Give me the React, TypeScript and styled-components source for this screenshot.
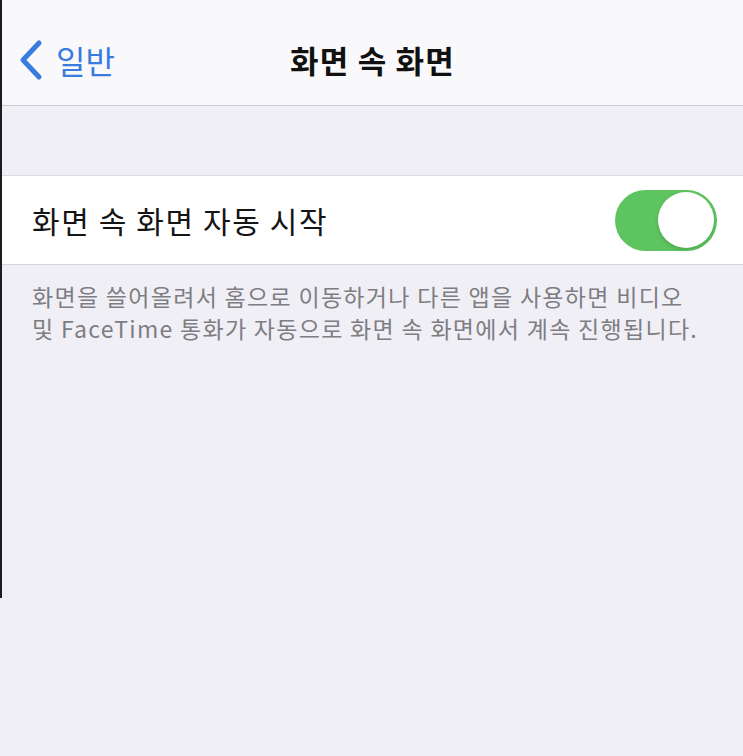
import React from "react";
import styled, { createGlobalStyle } from "styled-components";

const Global = createGlobalStyle`
  html, body { margin: 0; padding: 0; background: #f0eff5; }
  body { font-family: "Noto Sans CJK KR", "Noto Sans", sans-serif; -webkit-font-smoothing: antialiased; }
`;

const Page = styled.div`
  width: 743px;
  min-height: 756px;
  background: #f0eff5;
`;

const Frame = styled.div`
  height: 598px;
  border-left: 2px solid #1c1c1e;
  box-sizing: border-box;
  display: flex;
  flex-direction: column;
`;

const NavBar = styled.header`
  background: #f9f9fb;
  border-bottom: 1px solid #c9c8cd;
  display: grid;
  grid-template-columns: 1fr auto 1fr;
  align-items: center;
  padding-top: 14px;
  height: 91px;
`;

const BackButton = styled.div`
  display: flex;
  align-items: center;
  gap: 12px;
  padding-left: 16px;
  color: #3a7be0;
  font-size: 32px;
  font-weight: 400;
`;

const Title = styled.h1`
  margin: 0;
  font-size: 31px;
  font-weight: 700;
  color: #111;
  letter-spacing: 1.2px;
`;

const Spacer = styled.div`
  height: 69px;
`;

const Cell = styled.div`
  height: 88px;
  background: #fff;
  border-top: 1px solid #dcdce0;
  border-bottom: 1px solid #d6d6da;
  display: flex;
  align-items: center;
  justify-content: space-between;
  padding: 0 26px 0 30px;
`;

const CellLabel = styled.span`
  font-size: 30px;
  color: #141414;
  letter-spacing: 1.6px;
`;

const Toggle = styled.div<{ $on: boolean }>`
  width: 102px;
  height: 61px;
  border-radius: 31px;
  background: ${(p) => (p.$on ? "#5ec45f" : "#e5e5ea")};
  display: flex;
  align-items: center;
  justify-content: ${(p) => (p.$on ? "flex-end" : "flex-start")};
  padding: 0 3px;
  box-sizing: border-box;
`;

const Knob = styled.div`
  width: 56px;
  height: 56px;
  border-radius: 50%;
  background: #fff;
  box-shadow: 0 2px 4px rgba(0, 0, 0, 0.15);
`;

const Footer = styled.p`
  margin: 0;
  padding: 15px 20px 0 30px;
  font-size: 23px;
  line-height: 32px;
  color: #7d7d82;
  letter-spacing: 1.3px;
  white-space: nowrap;
`;

export default function App() {
  return (
    <Page>
      <Global />
      <Frame>
        <NavBar>
          <BackButton>
            <svg width="26" height="42" viewBox="0 0 26 42">
              <path d="M21 4 L5 21 L21 38" fill="none" stroke="#3a7be0" strokeWidth="5" strokeLinecap="round" strokeLinejoin="round" />
            </svg>
            <span>일반</span>
          </BackButton>
          <Title>화면 속 화면</Title>
          <div />
        </NavBar>
        <Spacer />
        <Cell>
          <CellLabel>화면 속 화면 자동 시작</CellLabel>
          <Toggle $on={true}>
            <Knob />
          </Toggle>
        </Cell>
        <Footer>
          화면을 쓸어올려서 홈으로 이동하거나 다른 앱을 사용하면 비디오
          <br />
          및 FaceTime 통화가 자동으로 화면 속 화면에서 계속 진행됩니다.
        </Footer>
      </Frame>
    </Page>
  );
}
